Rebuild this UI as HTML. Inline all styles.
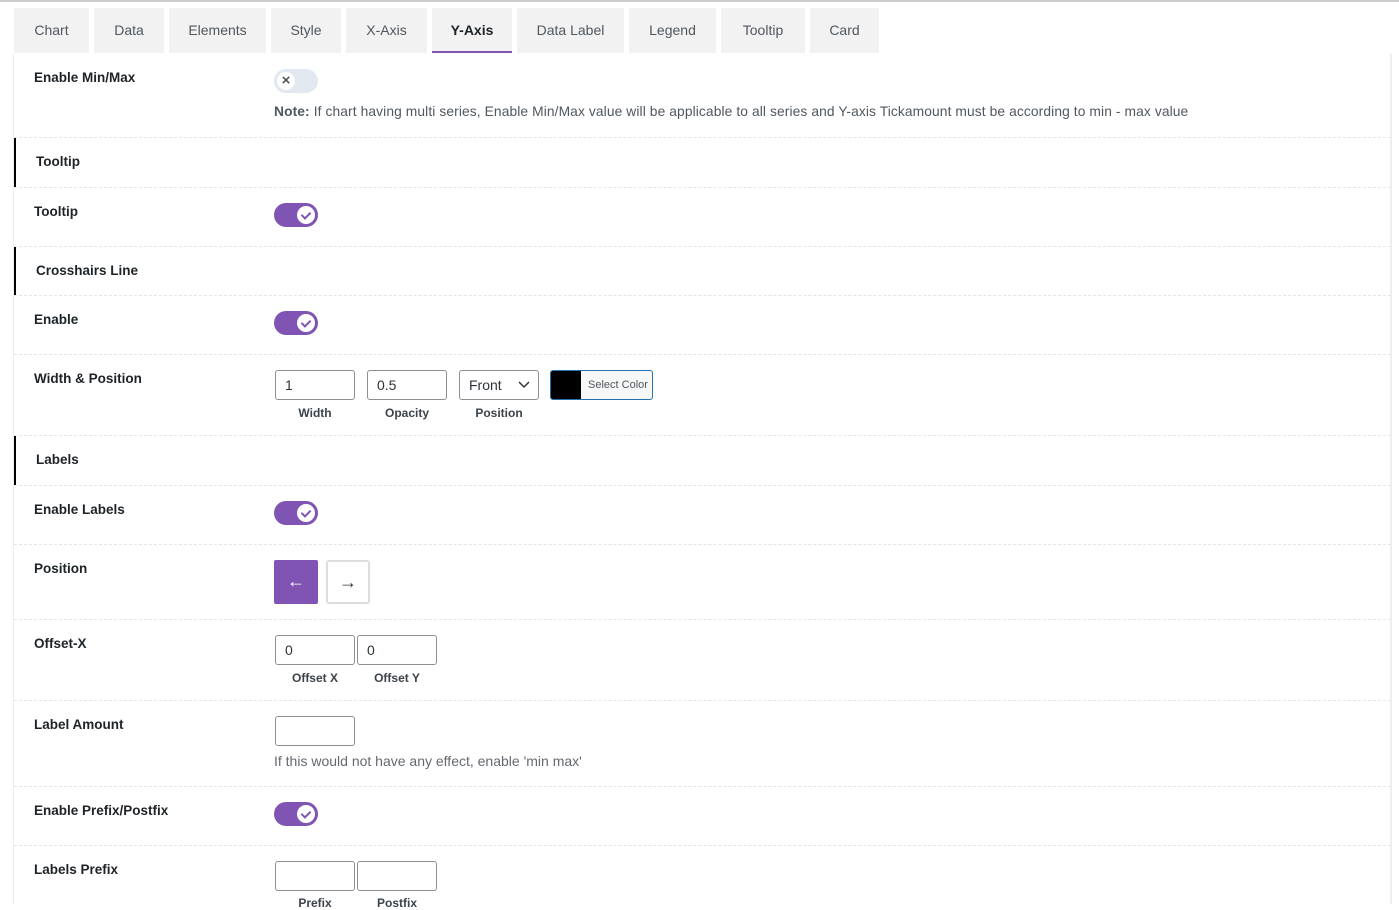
<!DOCTYPE html><html><head><style>
*{box-sizing:border-box;margin:0;padding:0}
body{width:1399px;height:904px;background:#fff;font-family:"Liberation Sans",sans-serif;color:#1d2327;position:relative;overflow:hidden}
.a{position:absolute}
.tab{position:absolute;top:8px;height:45px;background:#f2f2f2;color:#50575e;font-size:14px;line-height:45px;text-align:center}
.lbl{position:absolute;left:34px;font-size:13.5px;font-weight:bold;color:#1d2327}
.sep{position:absolute;left:14px;width:1377px;border-top:1px dashed #e5e5e5}
.hd{position:absolute;left:14px;width:2px;background:#000}
.tg{position:absolute;left:274px;width:44px;height:24px;border-radius:12px;background:#7f54b3}
.tg i{position:absolute;right:3px;top:3px;width:18px;height:18px;border-radius:50%;background:#fff}
.tg i:after{content:"";position:absolute;left:6px;top:4px;width:4px;height:7px;border:solid #7f54b3;border-width:0 2px 2px 0;transform:rotate(45deg)}
.in{position:absolute;height:30px;border:1px solid #8c8f94;border-radius:3px;font-size:14px;padding:6px 9px;color:#2c3338}
.cap{position:absolute;font-size:12px;font-weight:bold;color:#3c434a;text-align:center;width:80px}
</style></head><body>
<div class="a" style="left:0;top:0;width:1399px;height:2px;background:#ccc"></div>
<div class="a" style="left:13px;top:54px;width:1px;height:850px;background:#eee"></div>
<div class="a" style="left:1390px;top:54px;width:2px;height:850px;background:#eee"></div>
<div class="tab" style="left:14px;width:75px">Chart</div>
<div class="tab" style="left:94px;width:70px">Data</div>
<div class="tab" style="left:169px;width:97px">Elements</div>
<div class="tab" style="left:271px;width:70px">Style</div>
<div class="tab" style="left:346px;width:81px">X-Axis</div>
<div class="tab" style="left:432px;width:80px;background:#f2f2f2;color:#1d2327;font-weight:bold;border-bottom:2px solid #7f54b3">Y-Axis</div>
<div class="tab" style="left:517px;width:107px">Data Label</div>
<div class="tab" style="left:629px;width:87px">Legend</div>
<div class="tab" style="left:721px;width:84px">Tooltip</div>
<div class="tab" style="left:810px;width:69px">Card</div>

<div class="lbl" style="top:70px">Enable Min/Max</div>
<div class="a" style="left:274px;top:69px;width:44px;height:24px;border-radius:12px;background:#e2e8f0"><div class="a" style="left:3px;top:3px;width:18px;height:18px;border-radius:50%;background:#fff;font-size:15px;line-height:18px;text-align:center;font-weight:bold;color:#555">×</div></div>
<div class="a" style="left:274px;top:104px;font-size:13.8px;color:#50575e;letter-spacing:0.1px"><b>Note:</b> If chart having multi series, Enable Min/Max value will be applicable to all series and Y-axis Tickamount must be according to min - max value</div>
<div class="sep" style="top:137px"></div>
<div class="hd" style="top:138px;height:49px"></div>
<div class="lbl" style="top:154px;left:36px">Tooltip</div>
<div class="sep" style="top:187px"></div>
<div class="lbl" style="top:204px">Tooltip</div>
<div class="tg" style="top:203px"><i></i></div>
<div class="sep" style="top:246px"></div>
<div class="hd" style="top:247px;height:48px"></div>
<div class="lbl" style="top:263px;left:36px">Crosshairs Line</div>
<div class="sep" style="top:295px"></div>
<div class="lbl" style="top:312px">Enable</div>
<div class="tg" style="top:311px"><i></i></div>
<div class="sep" style="top:354px"></div>
<div class="lbl" style="top:371px">Width &amp; Position</div>
<div class="in" style="left:275px;top:370px;width:80px">1</div>
<div class="in" style="left:367px;top:370px;width:80px">0.5</div>
<div class="in" style="left:459px;top:370px;width:80px">Front<svg class="a" style="right:8px;top:10px" width="12" height="8"><path d="M1 1l5 5 5-5" stroke="#333" stroke-width="1.5" fill="none"/></svg></div>
<div class="a" style="left:550px;top:370px;width:103px;height:30px;border:1px solid #2271b1;border-radius:3px;background:#f6f7f7;overflow:hidden"><div class="a" style="left:0;top:0;width:30px;height:28px;background:#000"></div><div class="a" style="left:37px;top:8px;font-size:11px;color:#50575e">Select Color</div></div>
<div class="cap" style="left:275px;top:406px">Width</div>
<div class="cap" style="left:367px;top:406px">Opacity</div>
<div class="cap" style="left:459px;top:406px">Position</div>
<div class="sep" style="top:435px"></div>
<div class="hd" style="top:436px;height:49px"></div>
<div class="lbl" style="top:452px;left:36px">Labels</div>
<div class="sep" style="top:485px"></div>
<div class="lbl" style="top:502px">Enable Labels</div>
<div class="tg" style="top:501px"><i></i></div>
<div class="sep" style="top:544px"></div>
<div class="lbl" style="top:561px">Position</div>
<div class="a" style="left:274px;top:560px;width:44px;height:44px;background:#7f54b3;border-radius:2px;color:#fff;text-align:center;line-height:42px;font-size:18px">←</div>
<div class="a" style="left:326px;top:560px;width:44px;height:44px;border:2px solid #ddd;border-radius:3px;color:#333;text-align:center;line-height:40px;font-size:18px">→</div>
<div class="sep" style="top:619px"></div>
<div class="lbl" style="top:636px">Offset-X</div>
<div class="in" style="left:275px;top:635px;width:80px">0</div>
<div class="in" style="left:357px;top:635px;width:80px">0</div>
<div class="cap" style="left:275px;top:671px">Offset X</div>
<div class="cap" style="left:357px;top:671px">Offset Y</div>
<div class="sep" style="top:700px"></div>
<div class="lbl" style="top:717px">Label Amount</div>
<div class="in" style="left:275px;top:716px;width:80px"></div>
<div class="a" style="left:274px;top:753px;font-size:14px;color:#646970">If this would not have any effect, enable 'min max'</div>
<div class="sep" style="top:786px"></div>
<div class="lbl" style="top:803px">Enable Prefix/Postfix</div>
<div class="tg" style="top:802px"><i></i></div>
<div class="sep" style="top:845px"></div>
<div class="lbl" style="top:862px">Labels Prefix</div>
<div class="in" style="left:275px;top:861px;width:80px"></div>
<div class="in" style="left:357px;top:861px;width:80px"></div>
<div class="cap" style="left:275px;top:896px">Prefix</div>
<div class="cap" style="left:357px;top:896px">Postfix</div>
</body></html>
